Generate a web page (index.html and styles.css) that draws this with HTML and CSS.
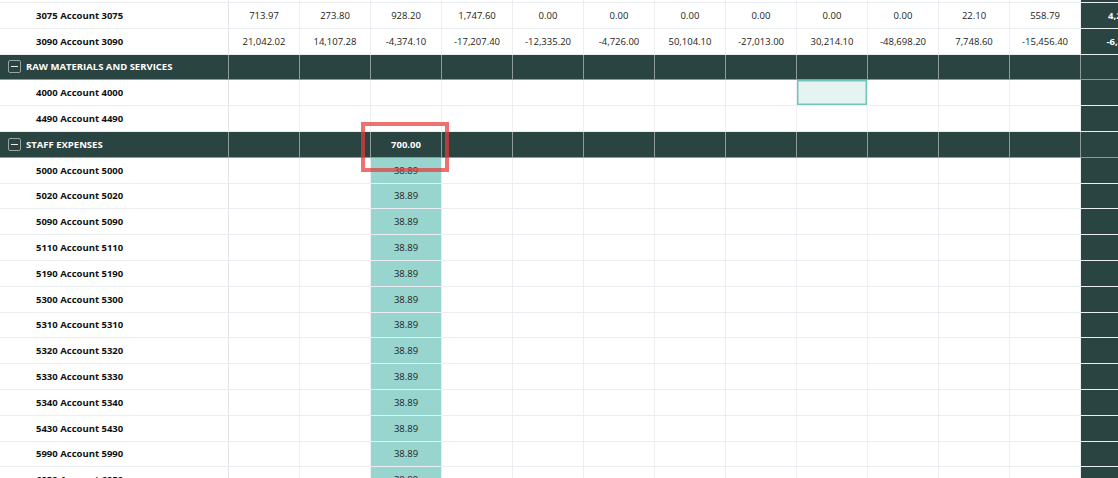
FILE: index.html
```html
<!DOCTYPE html>
<html>
<head>
<meta charset="utf-8">
<link rel="stylesheet" href="styles.css">
</head>
<body>
<div class="sheet">
  <div class="row">
    <div class="lbl"></div>
    <div class="c"></div><div class="c"></div><div class="c"></div><div class="c"></div><div class="c"></div><div class="c"></div><div class="c"></div><div class="c"></div><div class="c"></div><div class="c"></div><div class="c"></div><div class="c"></div>
    <div class="c tot"></div>
  </div>
  <div class="row">
    <div class="lbl">3075 Account 3075</div>
    <div class="c">713.97</div><div class="c">273.80</div><div class="c">928.20</div><div class="c">1,747.60</div><div class="c">0.00</div><div class="c">0.00</div><div class="c">0.00</div><div class="c">0.00</div><div class="c">0.00</div><div class="c">0.00</div><div class="c">22.10</div><div class="c">558.79</div>
    <div class="c tot">4,244.46</div>
  </div>
  <div class="row">
    <div class="lbl">3090 Account 3090</div>
    <div class="c">21,042.02</div><div class="c">14,107.28</div><div class="c">-4,374.10</div><div class="c">-17,207.40</div><div class="c">-12,335.20</div><div class="c">-4,726.00</div><div class="c">50,104.10</div><div class="c">-27,013.00</div><div class="c">30,214.10</div><div class="c">-48,698.20</div><div class="c">7,748.60</div><div class="c">-15,456.40</div>
    <div class="c tot">-6,594.20</div>
  </div>
  <div class="row grp">
    <div class="lbl"><span class="tog"></span>RAW MATERIALS AND SERVICES</div>
    <div class="c"></div><div class="c"></div><div class="c"></div><div class="c"></div><div class="c"></div><div class="c"></div><div class="c"></div><div class="c"></div><div class="c"></div><div class="c"></div><div class="c"></div><div class="c"></div>
    <div class="c tot"></div>
  </div>
  <div class="row">
    <div class="lbl">4000 Account 4000</div>
    <div class="c"></div><div class="c"></div><div class="c"></div><div class="c"></div><div class="c"></div><div class="c"></div><div class="c"></div><div class="c"></div><div class="c sel"></div><div class="c"></div><div class="c"></div><div class="c"></div>
    <div class="c tot"></div>
  </div>
  <div class="row">
    <div class="lbl">4490 Account 4490</div>
    <div class="c"></div><div class="c"></div><div class="c"></div><div class="c"></div><div class="c"></div><div class="c"></div><div class="c"></div><div class="c"></div><div class="c"></div><div class="c"></div><div class="c"></div><div class="c"></div>
    <div class="c tot"></div>
  </div>
  <div class="row grp">
    <div class="lbl"><span class="tog"></span>STAFF EXPENSES</div>
    <div class="c"></div><div class="c"></div><div class="c mark">700.00<span class="redbox"></span></div><div class="c"></div><div class="c"></div><div class="c"></div><div class="c"></div><div class="c"></div><div class="c"></div><div class="c"></div><div class="c"></div><div class="c"></div>
    <div class="c tot"></div>
  </div>
  <div class="row"><div class="lbl">5000 Account 5000</div><div class="c"></div><div class="c"></div><div class="c hl">38.89</div><div class="c"></div><div class="c"></div><div class="c"></div><div class="c"></div><div class="c"></div><div class="c"></div><div class="c"></div><div class="c"></div><div class="c"></div><div class="c tot"></div></div>
  <div class="row"><div class="lbl">5020 Account 5020</div><div class="c"></div><div class="c"></div><div class="c hl">38.89</div><div class="c"></div><div class="c"></div><div class="c"></div><div class="c"></div><div class="c"></div><div class="c"></div><div class="c"></div><div class="c"></div><div class="c"></div><div class="c tot"></div></div>
  <div class="row"><div class="lbl">5090 Account 5090</div><div class="c"></div><div class="c"></div><div class="c hl">38.89</div><div class="c"></div><div class="c"></div><div class="c"></div><div class="c"></div><div class="c"></div><div class="c"></div><div class="c"></div><div class="c"></div><div class="c"></div><div class="c tot"></div></div>
  <div class="row"><div class="lbl">5110 Account 5110</div><div class="c"></div><div class="c"></div><div class="c hl">38.89</div><div class="c"></div><div class="c"></div><div class="c"></div><div class="c"></div><div class="c"></div><div class="c"></div><div class="c"></div><div class="c"></div><div class="c"></div><div class="c tot"></div></div>
  <div class="row"><div class="lbl">5190 Account 5190</div><div class="c"></div><div class="c"></div><div class="c hl">38.89</div><div class="c"></div><div class="c"></div><div class="c"></div><div class="c"></div><div class="c"></div><div class="c"></div><div class="c"></div><div class="c"></div><div class="c"></div><div class="c tot"></div></div>
  <div class="row"><div class="lbl">5300 Account 5300</div><div class="c"></div><div class="c"></div><div class="c hl">38.89</div><div class="c"></div><div class="c"></div><div class="c"></div><div class="c"></div><div class="c"></div><div class="c"></div><div class="c"></div><div class="c"></div><div class="c"></div><div class="c tot"></div></div>
  <div class="row"><div class="lbl">5310 Account 5310</div><div class="c"></div><div class="c"></div><div class="c hl">38.89</div><div class="c"></div><div class="c"></div><div class="c"></div><div class="c"></div><div class="c"></div><div class="c"></div><div class="c"></div><div class="c"></div><div class="c"></div><div class="c tot"></div></div>
  <div class="row"><div class="lbl">5320 Account 5320</div><div class="c"></div><div class="c"></div><div class="c hl">38.89</div><div class="c"></div><div class="c"></div><div class="c"></div><div class="c"></div><div class="c"></div><div class="c"></div><div class="c"></div><div class="c"></div><div class="c"></div><div class="c tot"></div></div>
  <div class="row"><div class="lbl">5330 Account 5330</div><div class="c"></div><div class="c"></div><div class="c hl">38.89</div><div class="c"></div><div class="c"></div><div class="c"></div><div class="c"></div><div class="c"></div><div class="c"></div><div class="c"></div><div class="c"></div><div class="c"></div><div class="c tot"></div></div>
  <div class="row"><div class="lbl">5340 Account 5340</div><div class="c"></div><div class="c"></div><div class="c hl">38.89</div><div class="c"></div><div class="c"></div><div class="c"></div><div class="c"></div><div class="c"></div><div class="c"></div><div class="c"></div><div class="c"></div><div class="c"></div><div class="c tot"></div></div>
  <div class="row"><div class="lbl">5430 Account 5430</div><div class="c"></div><div class="c"></div><div class="c hl">38.89</div><div class="c"></div><div class="c"></div><div class="c"></div><div class="c"></div><div class="c"></div><div class="c"></div><div class="c"></div><div class="c"></div><div class="c"></div><div class="c tot"></div></div>
  <div class="row"><div class="lbl">5990 Account 5990</div><div class="c"></div><div class="c"></div><div class="c hl">38.89</div><div class="c"></div><div class="c"></div><div class="c"></div><div class="c"></div><div class="c"></div><div class="c"></div><div class="c"></div><div class="c"></div><div class="c"></div><div class="c tot"></div></div>
  <div class="row"><div class="lbl">6050 Account 6050</div><div class="c"></div><div class="c"></div><div class="c hl">38.89</div><div class="c"></div><div class="c"></div><div class="c"></div><div class="c"></div><div class="c"></div><div class="c"></div><div class="c"></div><div class="c"></div><div class="c"></div><div class="c tot"></div></div>
</div>
</body>
</html>
```

FILE: styles.css
```css
html, body {
  margin: 0;
  padding: 0;
  background: #ffffff;
  overflow: hidden;
}
body {
  width: 1118px;
  height: 478px;
  font-family: "Open Sans", "Noto Sans", sans-serif;
  font-size: 9.5px;
  color: #1c1c1c;
}
.sheet {
  margin-top: -22.8px;
  width: 1173px;
}
.row {
  display: grid;
  grid-template-columns: 229px repeat(12, 71px) 92px;
  height: 25.8px;
  box-sizing: border-box;
  border-bottom: 1px solid #eaedf1;
}
.lbl {
  display: flex;
  align-items: center;
  padding-left: 36px;
  font-weight: 700;
  color: #111111;
  border-right: 1px solid #e2e5e8;
  white-space: nowrap;
}
.c {
  display: flex;
  align-items: center;
  justify-content: center;
  border-right: 1px solid #eceef1;
  white-space: nowrap;
  color: #222222;
}
.tot {
  background: #2a4441;
  color: #ffffff;
  font-weight: 700;
  border-right: none;
}
.grp {
  background: #2a4441;
  border-bottom: 1px solid #8f9b99;
}
.grp .lbl {
  color: #ffffff;
  padding-left: 8px;
  gap: 5px;
  border-right: 1px solid #8f9b99;
}
.grp .c {
  border-right: 1px solid #8f9b99;
  color: #ffffff;
}
.grp .tot {
  border-right: none;
}
.tog {
  position: relative;
  width: 13px;
  height: 13px;
  box-sizing: border-box;
  border: 1px solid #98a4a2;
  border-radius: 2px;
  flex: none;
}
.tog::after {
  content: "";
  position: absolute;
  left: 2px;
  right: 2px;
  top: 5px;
  height: 1px;
  background: #e8eceb;
}
.mark {
  position: relative;
  font-weight: 700;
}
.redbox {
  position: absolute;
  left: -10px;
  right: -8px;
  top: -10px;
  bottom: -15px;
  border: 4.5px solid rgba(232, 58, 58, 0.72);
  z-index: 3;
  pointer-events: none;
}
.hl {
  background: #98d5ce;
  border-right: 1px solid #dff2ef;
}
.sel {
  background: #e5f3f1;
  box-shadow: inset 0 0 0 1.5px #72c6bb;
}
```
